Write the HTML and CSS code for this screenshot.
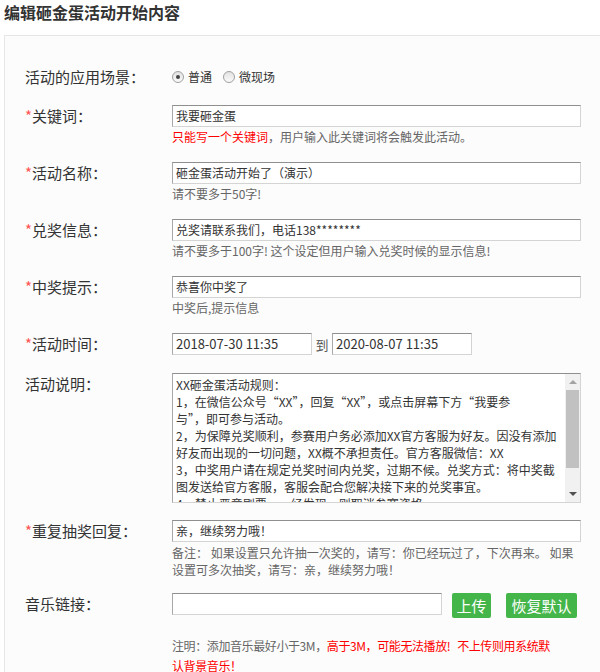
FILE: index.html
```html
<!DOCTYPE html>
<html lang="zh-CN">
<head>
  <meta charset="UTF-8">
  <meta name="viewport" content="width=device-width, initial-scale=1.0">
  <title>编辑砸金蛋活动开始内容</title>
  <link rel="stylesheet" href="styles.css">
</head>
<body>
  <h2 class="title">编辑砸金蛋活动开始内容</h2>

  <div class="panel">
    <div class="row row-radio">
      <div class="label">活动的应用场景：</div>
      <div class="field radios">
        <span class="radio checked"></span><span class="radio-text">普通</span>
        <span class="radio"></span><span class="radio-text">微现场</span>
      </div>
    </div>

    <div class="row">
      <div class="label"><span class="star">*</span>关键词：</div>
      <div class="field">
        <div class="input">我要砸金蛋</div>
        <div class="hint"><span class="red">只能写一个关键词</span>，用户输入此关键词将会触发此活动。</div>
      </div>
    </div>

    <div class="row">
      <div class="label"><span class="star">*</span>活动名称：</div>
      <div class="field">
        <div class="input">砸金蛋活动开始了（演示）</div>
        <div class="hint">请不要多于50字!</div>
      </div>
    </div>

    <div class="row">
      <div class="label"><span class="star">*</span>兑奖信息：</div>
      <div class="field">
        <div class="input">兑奖请联系我们，电话138********</div>
        <div class="hint">请不要多于100字! 这个设定但用户输入兑奖时候的显示信息!</div>
      </div>
    </div>

    <div class="row">
      <div class="label"><span class="star">*</span>中奖提示：</div>
      <div class="field">
        <div class="input">恭喜你中奖了</div>
        <div class="hint">中奖后,提示信息</div>
      </div>
    </div>

    <div class="row row-time">
      <div class="label"><span class="star">*</span>活动时间：</div>
      <div class="field times">
        <div class="input date">2018-07-30 11:35</div>
        <span class="to">到</span>
        <div class="input date">2020-08-07 11:35</div>
      </div>
    </div>

    <div class="row row-desc">
      <div class="label">活动说明：</div>
      <div class="field">
        <div class="textarea">
          <div class="textarea-text">XX砸金蛋活动规则：<br>1，在微信公众号“XX”，回复“XX”，或点击屏幕下方“我要参<br>与”，即可参与活动。<br>2，为保障兑奖顺利，参赛用户务必添加XX官方客服为好友。因没有添加<br>好友而出现的一切问题，XX概不承担责任。官方客服微信：XX<br>3，中奖用户请在规定兑奖时间内兑奖，过期不候。兑奖方式：将中奖截<br>图发送给官方客服，客服会配合您解决接下来的兑奖事宜。<br>4，禁止恶意刷票，一经发现，则取消参赛资格</div>
          <div class="scrollbar">
            <span class="arrow up"></span>
            <span class="thumb"></span>
            <span class="arrow down"></span>
          </div>
        </div>
      </div>
    </div>

    <div class="row row-repeat">
      <div class="label"><span class="star">*</span>重复抽奖回复：</div>
      <div class="field">
        <div class="input">亲，继续努力哦！</div>
        <div class="hint hint-two">备注： 如果设置只允许抽一次奖的，请写：你已经玩过了，下次再来。 如果<br>设置可多次抽奖，请写：亲，继续努力哦！</div>
      </div>
    </div>

    <div class="row row-music">
      <div class="label">音乐链接：</div>
      <div class="field">
        <div class="music">
          <div class="input music-input"></div>
          <button class="btn btn-upload">上传</button>
          <button class="btn btn-reset">恢复默认</button>
        </div>
        <div class="note">注明：添加音乐最好小于3M，<span class="red">高于3M，可能无法播放!&nbsp;&nbsp; 不上传则用系统默<br>认背景音乐！</span></div>
      </div>
    </div>
  </div>
</body>
</html>
```

FILE: styles.css
```css
*, *::before, *::after {
  box-sizing: border-box;
}

body {
  margin: 0;
  background-color: #fff;
  color: #333;
  font-family: "Noto Sans CJK SC", "Noto Sans", sans-serif;
  overflow: hidden;
}

.title {
  margin: 0;
  padding-left: 4px;
  font-size: 16px;
  line-height: 24px;
  font-weight: bold;
  color: #333;
}

.panel {
  margin: 11px -20px 0 4px;
  padding: 29px 0 40px 20px;
  background-color: #fcfcfc;
  border: 1px solid #e6e6e6;
  min-height: 700px;
}

.row {
  display: flex;
  margin-bottom: 16px;
}

.label {
  width: 147px;
  flex-shrink: 0;
  font-size: 15px;
  line-height: 22px;
  color: #333;
  white-space: nowrap;
}

.star {
  color: #f55;
}

.field {
  width: 409px;
}

.row-radio .label {
  line-height: 24px;
}

.radios {
  display: flex;
  align-items: center;
  height: 24px;
}

.radio {
  width: 12px;
  height: 12px;
  border-radius: 50%;
  border: 1px solid #a0a0a0;
  background: linear-gradient(#e2e2e2, #fafafa);
  display: flex;
  align-items: center;
  justify-content: center;
}

.radio.checked::after {
  content: "";
  width: 4px;
  height: 4px;
  border-radius: 50%;
  background-color: #444;
}

.radio-text {
  font-size: 12px;
  line-height: 24px;
  margin: 0 11px 0 4px;
  color: #333;
}

.input {
  height: 22px;
  padding: 0 3px;
  font-size: 12px;
  line-height: 20px;
  color: #333;
  background-color: #fff;
  border: 1px solid #d4d4d4;
  border-top-color: #8f8f8f;
  border-left-color: #a8a8a8;
  white-space: nowrap;
  overflow: hidden;
}

.hint {
  margin-top: 1px;
  font-size: 12px;
  line-height: 18px;
  color: #666;
  white-space: nowrap;
}

.red {
  color: #f00;
}

.row-time {
  margin-bottom: 18px;
}

.times {
  display: flex;
  align-items: center;
}

.date {
  width: 140px;
  font-size: 13px;
}

.to {
  width: 20px;
  text-align: center;
  font-size: 13px;
  color: #555;
}

.row-desc {
  margin-bottom: 17px;
}

.textarea {
  display: flex;
  height: 130px;
  background-color: #fff;
  border: 1px solid #d4d4d4;
  border-top-color: #8f8f8f;
  border-left-color: #a8a8a8;
}

.textarea-text {
  flex: 1;
  padding: 2px 3px;
  font-size: 12px;
  line-height: 17px;
  color: #333;
  white-space: nowrap;
  overflow: hidden;
}

.scrollbar {
  width: 15px;
  flex-shrink: 0;
  background-color: #f1f1f1;
  display: flex;
  flex-direction: column;
  align-items: center;
}

.arrow {
  width: 0;
  height: 0;
  border-left: 4px solid transparent;
  border-right: 4px solid transparent;
}

.arrow.up {
  margin-top: 6px;
  border-bottom: 4px solid #a3a3a3;
}

.arrow.down {
  margin-top: auto;
  margin-bottom: 6px;
  border-top: 4px solid #505050;
}

.thumb {
  width: 13px;
  height: 78px;
  margin-top: 6px;
  background-color: #c1c1c1;
}

.row-repeat {
  margin-bottom: 15px;
}

.hint-two {
  margin-top: 2px;
  line-height: 17px;
}

.music {
  display: flex;
  align-items: flex-start;
}

.music-input {
  width: 270px;
}

.btn {
  height: 25px;
  padding: 0;
  margin-left: 10px;
  border: none;
  border-radius: 2px;
  background-color: #44b549;
  color: #fff;
  font-family: inherit;
  font-size: 15px;
  line-height: 25px;
}

.btn-upload {
  width: 39px;
}

.btn-reset {
  width: 71px;
  margin-left: 15px;
}

.note {
  margin-top: 18px;
  font-size: 12px;
  line-height: 20px;
  letter-spacing: -0.4px;
  color: #666;
  white-space: nowrap;
}
```
